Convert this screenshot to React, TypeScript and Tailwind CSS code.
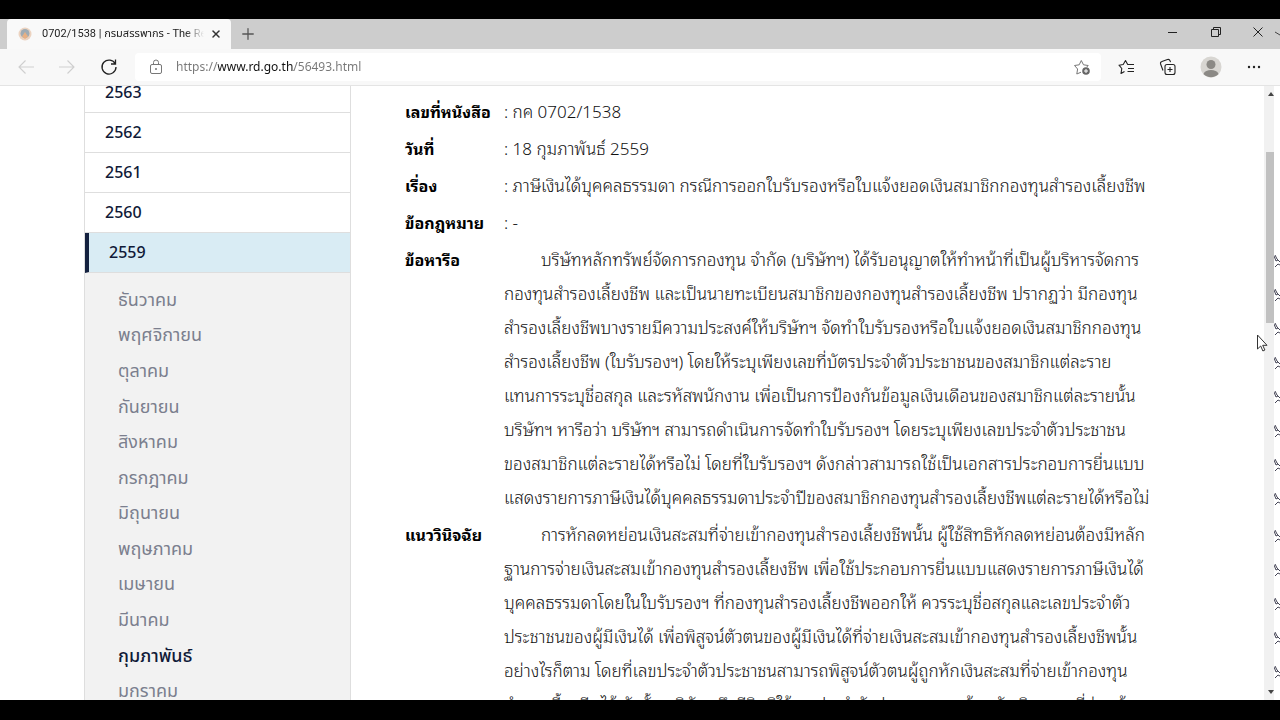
import { Plus, X } from 'lucide-react';

const years = ['2563', '2562', '2561', '2560', '2559'];
const activeYear = '2559';

const months = [
  'ธันวาคม',
  'พฤศจิกายน',
  'ตุลาคม',
  'กันยายน',
  'สิงหาคม',
  'กรกฎาคม',
  'มิถุนายน',
  'พฤษภาคม',
  'เมษายน',
  'มีนาคม',
  'กุมภาพันธ์',
  'มกราคม',
];
const activeMonth = 'กุมภาพันธ์';

const details = [
  { label: 'เลขที่หนังสือ', lines: [': กค 0702/1538'] },
  { label: 'วันที่', lines: [': 18 กุมภาพันธ์ 2559'] },
  { label: 'เรื่อง', lines: [': ภาษีเงินได้บุคคลธรรมดา กรณีการออกใบรับรองหรือใบแจ้งยอดเงินสมาชิกกองทุนสำรองเลี้ยงชีพ'] },
  { label: 'ข้อกฎหมาย', lines: [': -'] },
  {
    label: 'ข้อหารือ',
    lines: [
      'บริษัทหลักทรัพย์จัดการกองทุน จำกัด (บริษัทฯ) ได้รับอนุญาตให้ทำหน้าที่เป็นผู้บริหารจัดการ',
      'กองทุนสำรองเลี้ยงชีพ และเป็นนายทะเบียนสมาชิกของกองทุนสำรองเลี้ยงชีพ ปรากฏว่า มีกองทุน',
      'สำรองเลี้ยงชีพบางรายมีความประสงค์ให้บริษัทฯ จัดทำใบรับรองหรือใบแจ้งยอดเงินสมาชิกกองทุน',
      'สำรองเลี้ยงชีพ (ใบรับรองฯ) โดยให้ระบุเพียงเลขที่บัตรประจำตัวประชาชนของสมาชิกแต่ละราย',
      'แทนการระบุชื่อสกุล และรหัสพนักงาน เพื่อเป็นการป้องกันข้อมูลเงินเดือนของสมาชิกแต่ละรายนั้น',
      'บริษัทฯ หารือว่า บริษัทฯ สามารถดำเนินการจัดทำใบรับรองฯ โดยระบุเพียงเลขประจำตัวประชาชน',
      'ของสมาชิกแต่ละรายได้หรือไม่ โดยที่ใบรับรองฯ ดังกล่าวสามารถใช้เป็นเอกสารประกอบการยื่นแบบ',
      'แสดงรายการภาษีเงินได้บุคคลธรรมดาประจำปีของสมาชิกกองทุนสำรองเลี้ยงชีพแต่ละรายได้หรือไม่',
    ],
  },
  {
    label: 'แนววินิจฉัย',
    lines: [
      'การหักลดหย่อนเงินสะสมที่จ่ายเข้ากองทุนสำรองเลี้ยงชีพนั้น ผู้ใช้สิทธิหักลดหย่อนต้องมีหลัก',
      'ฐานการจ่ายเงินสะสมเข้ากองทุนสำรองเลี้ยงชีพ เพื่อใช้ประกอบการยื่นแบบแสดงรายการภาษีเงินได้',
      'บุคคลธรรมดาโดยในใบรับรองฯ ที่กองทุนสำรองเลี้ยงชีพออกให้ ควรระบุชื่อสกุลและเลขประจำตัว',
      'ประชาชนของผู้มีเงินได้ เพื่อพิสูจน์ตัวตนของผู้มีเงินได้ที่จ่ายเงินสะสมเข้ากองทุนสำรองเลี้ยงชีพนั้น',
      'อย่างไรก็ตาม โดยที่เลขประจำตัวประชาชนสามารถพิสูจน์ตัวตนผู้ถูกหักเงินสะสมที่จ่ายเข้ากองทุน',
      'สำรองเลี้ยงชีพได้ ดังนั้น บริษัทฯ จึงมีสิทธิใช้เลขประจำตัวประชาชนของผู้ถูกหักเงินสะสมที่จ่ายเข้า',
    ],
  },
];

function TabStrip() {
  return (
    <div className="flex h-[30px] shrink-0 items-stretch bg-[#cdcdcd] pl-[7px]">
      <div className="flex w-56 items-center rounded-t bg-[#f9f9f9] pl-[11px] pr-[7px]">
        <svg viewBox="0 0 14 14" className="h-3.5 w-3.5 shrink-0">
          <circle cx="7" cy="7" r="6.5" fill="#ecd3c0" />
          <circle cx="7" cy="6.5" r="4.5" fill="#9fabb3" />
          <path d="M4 9.5 7 5l3 4.5-3 2.5z" fill="#e8b083" />
        </svg>
        <span className="ml-2.5 min-w-0 flex-1 overflow-hidden whitespace-nowrap font-['Roboto','Noto_Sans_Thai',sans-serif] text-[11px] text-[#222] [mask-image:linear-gradient(90deg,#000_88%,transparent)]">
          0702/1538 | กรมสรรพากร - The Rev
        </span>
        <button aria-label="Close tab" className="ml-1 flex h-4 w-4 items-center justify-center text-[#333]">
          <X className="h-3 w-3" strokeWidth={3} />
        </button>
      </div>
      <button aria-label="New tab" className="ml-[7px] flex w-5 items-center justify-center text-[#555]">
        <Plus className="h-[18px] w-[18px]" strokeWidth={1.7} />
      </button>
      <div className="ml-auto flex items-center pb-1 text-[#222]">
        <button aria-label="Minimize" className="flex w-[43px] justify-center">
          <svg viewBox="0 0 10 10" className="h-2.5 w-2.5" stroke="currentColor">
            <path d="M0 5.5h9" />
          </svg>
        </button>
        <button aria-label="Restore" className="flex w-[43px] justify-center">
          <svg viewBox="0 0 10 10" className="h-2.5 w-2.5" fill="none" stroke="currentColor">
            <path d="M.5 2.5h7v7h-7zM2.5 2.5v-2h7v7h-2" />
          </svg>
        </button>
        <button aria-label="Close window" className="ml-1 flex w-[34px] justify-center">
          <svg viewBox="0 0 10 10" className="h-2.5 w-2.5" stroke="currentColor">
            <path d="m.5.5 9 9m0-9-9 9" />
          </svg>
        </button>
        <svg viewBox="0 0 5 10" className="h-2.5 w-[5px]" stroke="#444">
          <path d="m0 5 5 3" />
        </svg>
      </div>
    </div>
  );
}

function Toolbar() {
  return (
    <div className="flex h-[37px] shrink-0 items-center border-b border-[#e4e4e4] bg-[#f8f8f8] pl-[18px] pr-[19px]">
      <button aria-label="Back" className="text-[#cfcfcf]">
        <svg viewBox="0 0 16 16" className="h-4 w-4" fill="none" stroke="currentColor" strokeWidth="1.1">
          <path d="M16 8H1M7.5 1.5 1 8l6.500 6.500" />
        </svg>
      </button>
      <button aria-label="Forward" className="ml-[25px] text-[#cfcfcf]">
        <svg viewBox="0 0 16 16" className="h-4 w-4" fill="none" stroke="currentColor" strokeWidth="1.1">
          <path d="M0 8h15M8.500 1.500 15 8l-6.500 6.500" />
        </svg>
      </button>
      <button aria-label="Refresh" className="ml-[25px] text-[#222]">
        <svg viewBox="0 0 18 18" className="h-[18px] w-[18px]" fill="none" stroke="currentColor" strokeWidth="1.3">
          <path d="M15.300 6A7 7 0 1 0 16 9M15.500 1.500V6H11" />
        </svg>
      </button>
      <div className="ml-[17px] flex h-7 flex-1 items-center rounded bg-white pl-3.5 pr-2.5">
        <svg viewBox="0 0 14 16" className="h-4 w-3.5 shrink-0" fill="none" stroke="#777">
          <rect x="1.500" y="5.500" width="11" height="9" rx="1.500" />
          <path d="M4.500 5.500V3.500a2.500 2.500 0 0 1 5 0v2" />
          <circle cx="7" cy="10" r=".6" fill="#777" />
        </svg>
        <input
          type="text"
          aria-label="Address"
          defaultValue="https://www.rd.go.th/56493.html"
          className="ml-[13px] min-w-0 flex-1 bg-[linear-gradient(90deg,#777_42px,#111_42px,#111_118px,#777_118px)] bg-clip-text text-xs text-transparent outline-none"
        />
        <button aria-label="Add to favorites" className="text-[#777]">
          <svg viewBox="0 0 18 18" className="h-[18px] w-[18px]" fill="none" stroke="currentColor">
            <path d="M8 14.200 3.800 16l.8-5L1.500 7.500l4.700-.7L8.300 2.500l2.200 4.300 4.700.7-1.400 1.500" strokeLinejoin="round" />
            <circle cx="13" cy="13" r="3.800" fill="#666" stroke="none" />
            <path d="M13 11v4M11 13h4" stroke="#fff" />
          </svg>
        </button>
      </div>
      <div className="ml-[17px] flex items-center gap-[23px] text-[#222]">
        <button aria-label="Favorites">
          <svg viewBox="0 0 18 18" className="h-[18px] w-[18px]" fill="none" stroke="currentColor" strokeWidth="1.1">
            <path d="M6.500 13.500 3 15.500l.8-5L1 7.200l4.200-.7L7.500 2.500l2.200 4H16M10 10.500h6M9.500 13.500H16" strokeLinejoin="round" />
          </svg>
        </button>
        <button aria-label="Collections">
          <svg viewBox="0 0 18 18" className="h-[18px] w-[18px]" fill="none" stroke="currentColor" strokeWidth="1.1">
            <rect x="6" y="6.500" width="10" height="10" rx="2" />
            <path d="M11 9v5M8.500 11.500h5M4 12.500 1.600 6a2 2 0 0 1 1.300-2.500l5.600-2A2 2 0 0 1 11 2.700l.5 1.500" />
          </svg>
        </button>
        <button aria-label="Profile">
          <svg viewBox="0 0 22 22" className="h-[22px] w-[22px]">
            <circle cx="11" cy="11" r="10.500" fill="#d8d6d2" />
            <circle cx="11" cy="8.500" r="4.500" fill="#8b8985" />
            <path d="M3.500 18c1-3 4-4 7.500-4s6.500 1 7.500 4a10.500 10.500 0 0 1-15 0z" fill="#8b8985" />
          </svg>
        </button>
        <button aria-label="More" className="ml-0.5">
          <svg viewBox="0 0 14 4" className="h-1 w-3.5" fill="currentColor">
            <circle cx="2" cy="2" r="1.200" />
            <circle cx="7" cy="2" r="1.200" />
            <circle cx="12" cy="2" r="1.200" />
          </svg>
        </button>
      </div>
    </div>
  );
}

function Sidebar() {
  return (
    <nav className="ml-[84px] w-[267px] shrink-0 border-x border-[#dedede] bg-[#f2f2f2]">
      <ul className="-mt-[13px]">
        {years.map((year) => (
          <li key={year}>
            <a
              href="#"
              className={
                year === activeYear
                  ? 'flex h-10 items-center border-b border-l-4 border-b-[#dedede] border-l-[#14213f] bg-[#d9ecf4] pb-0.5 pl-5 text-base font-medium text-[#101a38]'
                  : 'flex h-10 items-center border-b border-[#dedede] bg-white pb-0.5 pl-5 text-base font-medium text-[#101a38]'
              }
            >
              {year}
            </a>
          </li>
        ))}
      </ul>
      <ul className="mt-2 grid h-[427px] auto-rows-fr">
        {months.map((month) => (
          <li key={month} className="flex items-center pl-[33px]">
            <a href="#" className={month === activeMonth ? 'text-lg font-medium text-[#101a38]' : 'text-lg text-[#7b7f8e]'}>
              {month}
            </a>
          </li>
        ))}
      </ul>
    </nav>
  );
}

function Ruling() {
  return (
    <main className="min-w-0 flex-1 pl-[54px] pt-[9px]">
      <dl className="flex flex-col gap-[3px] whitespace-nowrap font-['Noto_Sans','Noto_Sans_Thai_Looped','Noto_Looped_Thai','Sarabun','Loma','Garuda','Noto_Serif_Thai','Noto_Sans_Thai',sans-serif] text-[17px] leading-[34px] text-[#111]">
        {details.map((item) => (
          <div key={item.label} className="flex">
            <dt className="w-[99px] shrink-0 text-base leading-[34px] font-bold text-black">{item.label}</dt>
            <dd className={item.lines.length > 1 ? 'indent-[37px] font-light' : 'font-light'}>
              {item.lines.map((line) => (
                <span key={line} className="block not-first:indent-0">
                  {line}
                </span>
              ))}
            </dd>
          </div>
        ))}
      </dl>
    </main>
  );
}

function Scrollbar() {
  return (
    <div className="flex w-2.5 shrink-0 flex-col bg-[#f1f1f1] py-1.5">
      <svg viewBox="0 0 6 4" className="ml-1 h-1 w-1.5" fill="#444">
        <path d="M0 4 3 0l3 4z" />
      </svg>
      <div className="mt-14 ml-0.5 h-[171px] bg-[#c1c1c1]" />
      <svg viewBox="0 0 6 4" className="mt-auto ml-1 h-1 w-1.5" fill="#444">
        <path d="m0 0 3 4 3-4z" />
      </svg>
    </div>
  );
}

// edge of the window that sits behind the browser
function BackWindow() {
  return (
    <div aria-hidden="true" className="w-1.5 shrink-0 overflow-hidden bg-white pt-[158px]">
      <svg viewBox="0 0 6 460" className="h-[460px] w-1.5" fill="none" stroke="#445" strokeWidth="1">
        {[10, 44, 78, 112, 146, 180, 214, 248, 285, 319, 353, 387, 421, 455].map((y) => (
          <path key={y} d={`M0 ${y + 2}l2 5 2-1M1 ${y + 1}l2 4 3 3M1 ${y + 13}l3-3 2 1`} />
        ))}
      </svg>
    </div>
  );
}

export default function App() {
  return (
    <div className="flex h-screen flex-col overflow-hidden bg-black pb-5 pt-[19px] font-['Noto_Sans','Noto_Sans_Thai',sans-serif]">
      <TabStrip />
      <Toolbar />
      <div className="relative flex min-h-0 flex-1 overflow-hidden bg-white">
        <Sidebar />
        <Ruling />
        <Scrollbar />
        <BackWindow />
        <svg viewBox="0 0 12 18" className="absolute right-3 top-[248px] h-[18px] w-3" fill="#fff" stroke="#333">
          <path d="M1.500 1v14l3.200-3 2.200 5 2-1-2.200-4.700H11z" />
        </svg>
      </div>
    </div>
  );
}
